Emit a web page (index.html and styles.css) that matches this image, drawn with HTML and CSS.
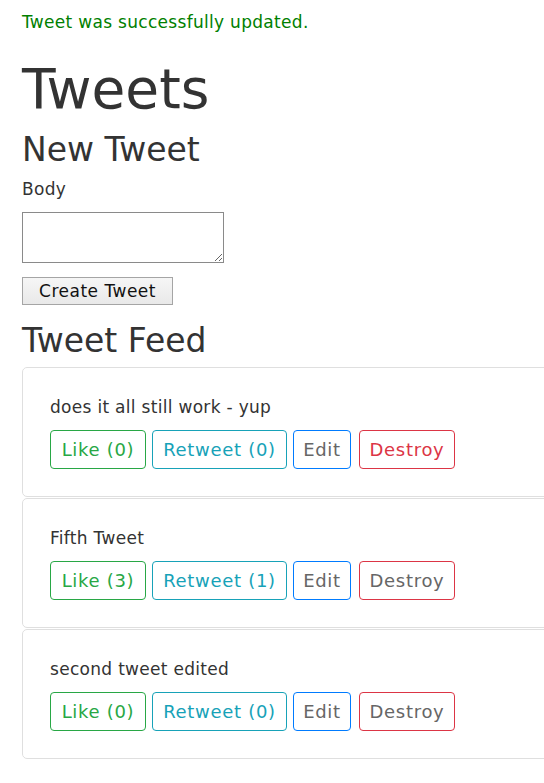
FILE: index.html
```html
<!DOCTYPE html>
<html>
<head>
<meta charset="utf-8">
<title>Tweets</title>
<link rel="stylesheet" href="styles.css">
</head>
<body>
<main class="page">
  <p class="notice">Tweet was successfully updated.</p>
  <h1 class="title">Tweets</h1>
  <h2 class="subtitle">New Tweet</h2>
  <form class="new-form">
    <label class="field-label" for="body">Body</label>
    <textarea id="body" class="field-input"></textarea>
    <button type="button" class="submit-btn">Create Tweet</button>
  </form>
  <h2 class="subtitle feed-title">Tweet Feed</h2>
  <section class="feed">
    <article class="card">
      <p class="card-text">does it all still work - yup</p>
      <div class="actions">
        <span class="btn btn-like">Like (0)</span>
        <span class="btn btn-retweet">Retweet (0)</span>
        <span class="btn btn-edit">Edit</span>
        <span class="btn btn-destroy btn-destroy-red">Destroy</span>
      </div>
    </article>
    <article class="card">
      <p class="card-text">Fifth Tweet</p>
      <div class="actions">
        <span class="btn btn-like">Like (3)</span>
        <span class="btn btn-retweet">Retweet (1)</span>
        <span class="btn btn-edit">Edit</span>
        <span class="btn btn-destroy">Destroy</span>
      </div>
    </article>
    <article class="card">
      <p class="card-text">second tweet edited</p>
      <div class="actions">
        <span class="btn btn-like">Like (0)</span>
        <span class="btn btn-retweet">Retweet (0)</span>
        <span class="btn btn-edit">Edit</span>
        <span class="btn btn-destroy">Destroy</span>
      </div>
    </article>
  </section>
</main>
</body>
</html>
```
FILE: styles.css
```css
html {
  overflow-x: hidden;
}
body {
  margin: 0;
  font-family: "DejaVu Sans", Verdana, sans-serif;
  font-size: 17px;
  letter-spacing: 0.3px;
  line-height: 24px;
  color: #333;
  background: #fff;
}
.page {
  padding: 10px 0 0 22px;
}
.notice {
  margin: 0;
  color: #008000;
  font-size: 17px;
  line-height: 24px;
  letter-spacing: 0.3px;
}
.title {
  margin: 23px 0 0;
  font-size: 55px;
  font-weight: normal;
  line-height: 64px;
  letter-spacing: 0;
  color: #333;
}
.subtitle {
  margin: 9px 0 0;
  font-size: 33px;
  font-weight: normal;
  line-height: 40px;
  letter-spacing: 0;
  color: #333;
}
.new-form {
  display: flex;
  flex-direction: column;
  align-items: flex-start;
}
.field-label {
  margin-top: 7px;
  line-height: 24px;
}
.field-input {
  margin-top: 11px;
  width: 202px;
  height: 51px;
  box-sizing: border-box;
  border: 1px solid #8a8a8a;
  padding: 2px;
  resize: vertical;
  font-family: "DejaVu Sans", sans-serif;
}
.submit-btn {
  margin-top: 14px;
  width: 151px;
  height: 28px;
  box-sizing: border-box;
  border: 1px solid #a5a5a5;
  background: linear-gradient(#f6f6f6, #e9e9e9);
  font-family: "DejaVu Sans", sans-serif;
  font-size: 17px;
  letter-spacing: 0.5px;
  color: #111;
  padding: 0;
}
.feed-title {
  margin-top: 16px;
}
.feed {
  margin-top: 6px;
  display: flex;
  flex-direction: column;
  gap: 1px;
  overflow: hidden;
}
.card {
  width: calc(100% + 20px);
  box-sizing: border-box;
  height: 130px;
  border: 1px solid #dfdfdf;
  border-radius: 5px;
  padding: 27px 27px;
}
.card-text {
  margin: 0;
  line-height: 24px;
  color: #333;
}
.actions {
  margin-top: 11px;
  display: flex;
}
.btn {
  display: inline-block;
  box-sizing: border-box;
  height: 39px;
  line-height: 38px;
  padding: 0;
  text-align: center;
  border: 1px solid;
  border-radius: 4px;
  font-size: 18px;
  letter-spacing: 0.7px;
  color: #666;
}
.btn-like {
  width: 96px;
  border-color: #28a745;
  color: #28a745;
}
.btn-retweet {
  margin-left: 6px;
  width: 135px;
  border-color: #17a2b8;
  color: #17a2b8;
}
.btn-edit {
  margin-left: 6px;
  width: 58px;
  border-color: #007bff;
}
.btn-destroy {
  margin-left: 8px;
  width: 96px;
  border-color: #dc3545;
}
.btn-destroy-red {
  color: #dc3545;
}
```
